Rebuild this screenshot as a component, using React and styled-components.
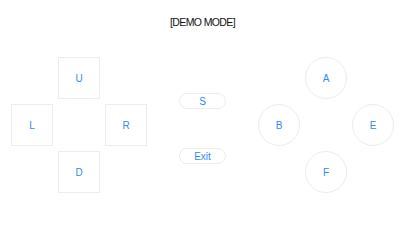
import React from "react";
import styled, { createGlobalStyle } from "styled-components";

const Global = createGlobalStyle`
  html, body { margin: 0; padding: 0; background: #ffffff; }
  body { font-family: "Liberation Sans", Arial, sans-serif; }
`;

const Screen = styled.div`
  width: 405px;
  height: 228px;
  display: flex;
  flex-direction: column;
  align-items: center;
  padding-top: 17px;
  box-sizing: border-box;
`;

const Title = styled.div`
  font-size: 10.5px;
  line-height: 11px;
  letter-spacing: -0.6px;
  color: #111111;
  margin-bottom: 29px;
`;

const Controls = styled.div`
  width: 100%;
  display: flex;
  justify-content: space-between;
  padding: 0 11px;
  box-sizing: border-box;
`;

const Pad = styled.div`
  display: grid;
  grid-template-columns: repeat(3, 42px);
  grid-template-rows: repeat(3, 42px);
  gap: 5px;
`;

const Key = styled.button`
  grid-column: ${(p) => p.$col};
  grid-row: ${(p) => p.$row};
  width: 42px;
  height: 42px;
  box-sizing: border-box;
  border: 1px solid #ececec;
  border-radius: ${(p) => (p.$round ? "50%" : "0")};
  background: #ffffff;
  color: #2f89f7;
  font-family: "Liberation Sans", Arial, sans-serif;
  font-size: 10px;
  padding: 0;
  display: flex;
  align-items: center;
  justify-content: center;
  cursor: pointer;
`;

const Middle = styled.div`
  display: flex;
  flex-direction: column;
  align-items: center;
  padding-top: 36px;
  gap: 39px;
`;

const Pill = styled.button`
  width: 47px;
  height: 16px;
  box-sizing: border-box;
  border: 1px solid #ececec;
  border-radius: 8px;
  background: #ffffff;
  color: #2f89f7;
  font-family: "Liberation Sans", Arial, sans-serif;
  font-size: 10px;
  padding: 0;
  display: flex;
  align-items: center;
  justify-content: center;
  cursor: pointer;
`;

const dpad = [
  { label: "U", col: 2, row: 1 },
  { label: "L", col: 1, row: 2 },
  { label: "R", col: 3, row: 2 },
  { label: "D", col: 2, row: 3 },
];

const face = [
  { label: "A", col: 2, row: 1 },
  { label: "B", col: 1, row: 2 },
  { label: "E", col: 3, row: 2 },
  { label: "F", col: 2, row: 3 },
];

export default function App() {
  return (
    <>
      <Global />
      <Screen>
        <Title>[DEMO MODE]</Title>
        <Controls>
          <Pad>
            {dpad.map((k) => (
              <Key key={k.label} $col={k.col} $row={k.row}>
                {k.label}
              </Key>
            ))}
          </Pad>
          <Middle>
            <Pill>S</Pill>
            <Pill>Exit</Pill>
          </Middle>
          <Pad>
            {face.map((k) => (
              <Key key={k.label} $col={k.col} $row={k.row} $round>
                {k.label}
              </Key>
            ))}
          </Pad>
        </Controls>
      </Screen>
    </>
  );
}
